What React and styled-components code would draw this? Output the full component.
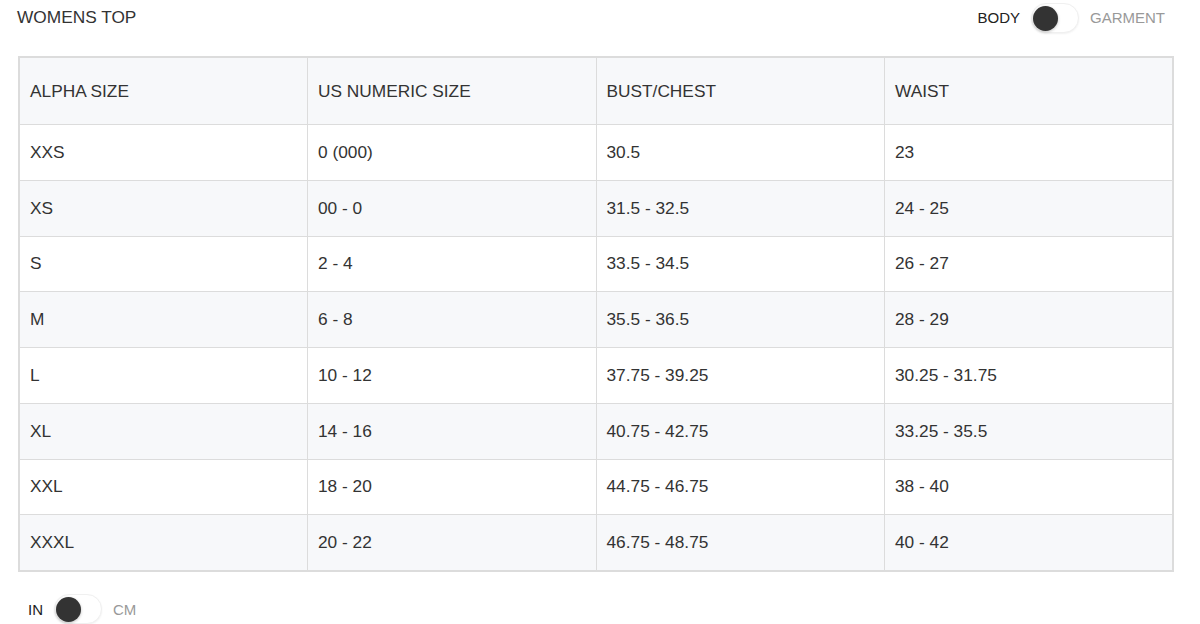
import React, { useState } from 'react';
import styled, { createGlobalStyle } from 'styled-components';

const GlobalStyle = createGlobalStyle`
    body {
        margin : 0;
        background : #fff;
        font-family : "Liberation Sans", Arial, Helvetica, sans-serif;
        color : #333;
    }
`;

const rows = [
    ['XXS', '0 (000)', '30.5', '23'],
    ['XS', '00 - 0', '31.5 - 32.5', '24 - 25'],
    ['S', '2 - 4', '33.5 - 34.5', '26 - 27'],
    ['M', '6 - 8', '35.5 - 36.5', '28 - 29'],
    ['L', '10 - 12', '37.75 - 39.25', '30.25 - 31.75'],
    ['XL', '14 - 16', '40.75 - 42.75', '33.25 - 35.5'],
    ['XXL', '18 - 20', '44.75 - 46.75', '38 - 40'],
    ['XXXL', '20 - 22', '46.75 - 48.75', '40 - 42'],
];

const headers = ['ALPHA SIZE', 'US NUMERIC SIZE', 'BUST/CHEST', 'WAIST'];

const Switch = ({ left, right, on, onToggle }) => (
    <SwitchWrap>
        <SwitchLabel active={!on}>{left}</SwitchLabel>
        <Track onClick={onToggle}>
            <Knob on={on} />
        </Track>
        <SwitchLabel active={on}>{right}</SwitchLabel>
    </SwitchWrap>
);

const App = () => {
    const [garment, setGarment] = useState(false);
    const [cm, setCm] = useState(false);

    return (
        <Container>
            <GlobalStyle />
            <TopBar>
                <Title>WOMENS TOP</Title>
                <Switch left="BODY" right="GARMENT" on={garment} onToggle={() => setGarment(!garment)} />
            </TopBar>

            <SizeTable>
                <thead>
                    <tr>
                        {headers.map((h) => <th key={h}>{h}</th>)}
                    </tr>
                </thead>
                <tbody>
                    {rows.map((r) => (
                        <tr key={r[0]}>
                            {r.map((c, i) => <td key={i}>{c}</td>)}
                        </tr>
                    ))}
                </tbody>
            </SizeTable>

            <BottomBar>
                <Switch left="IN" right="CM" on={cm} onToggle={() => setCm(!cm)} />
            </BottomBar>
        </Container>
    );
};

export default App;

const Container = styled.div`
    width : 1200px;
    height : 624px;
    overflow : hidden;
    padding : 0 27px 0 17px;
    box-sizing : border-box;
`;

const TopBar = styled.div`
    height : 35px;
    display : flex;
    align-items : center;
    justify-content : space-between;
    margin-bottom : 21px;
    padding-right : 8px;
`;

const Title = styled.div`
    font-size : 17.3px;
    color : #333;
`;

const SwitchWrap = styled.div`
    display : flex;
    align-items : center;
    font-size : 15px;
`;

const SwitchLabel = styled.span`
    color : ${(p) => (p.active ? '#222' : '#999')};
`;

const Track = styled.div`
    position : relative;
    width : 48px;
    height : 30px;
    margin : 0 11px 0 11px;
    border-radius : 15px;
    border : 1px solid #f0f0f0;
    box-shadow : 0 1px 2px rgba(0, 0, 0, 0.06);
    background : #fff;
    box-sizing : border-box;
    cursor : pointer;
`;

const Knob = styled.div`
    position : absolute;
    top : 2px;
    left : ${(p) => (p.on ? '21px' : '1px')};
    width : 25px;
    height : 25px;
    border-radius : 50%;
    background : #333;
    box-shadow : 0 1px 3px rgba(0, 0, 0, 0.25);
`;

const SizeTable = styled.table`
    width : 1156px;
    margin-left : 1px;
    border-collapse : collapse;
    border : 2px solid #dcdcdc;
    table-layout : fixed;
    font-size : 17.3px;
    color : #333;

    th, td {
        border : 1px solid #dcdcdc;
        padding : 0 10px;
        text-align : left;
        font-weight : normal;
    }

    th {
        height : 66px;
        background : #f7f8fa;
    }

    td {
        height : 54.75px;
    }

    tbody tr:nth-child(even) td {
        background : #f7f8fa;
    }
`;

const BottomBar = styled.div`
    display : flex;
    align-items : center;
    height : 34px;
    margin-top : 20px;
    padding-left : 11px;
`;
